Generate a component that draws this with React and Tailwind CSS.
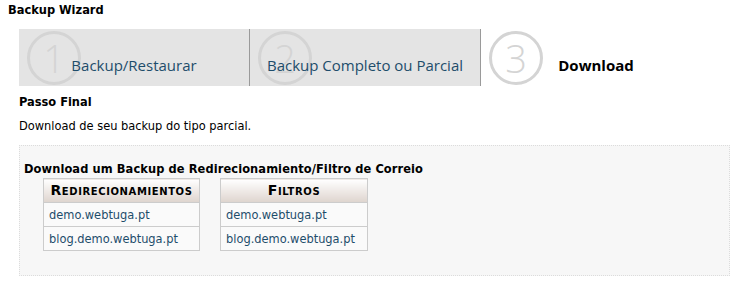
import React from "react";

const tabs = [
  { n: "1", label: "Backup/Restaurar", done: true },
  { n: "2", label: "Backup Completo ou Parcial", done: true },
  { n: "3", label: "Download", done: false },
];

const tables = [
  { title: "Redirecionamientos", width: "w-[157px]", rows: ["demo.webtuga.pt", "blog.demo.webtuga.pt"] },
  { title: "Filtros", width: "w-[148px]", rows: ["demo.webtuga.pt", "blog.demo.webtuga.pt"] },
];

const Step = ({ n, label, done }) => (
  <div
    className={`relative h-full flex items-end justify-center pb-[10px] ${
      done ? "w-[231px] bg-[#e4e4e4] border-r border-[#9a9a9a]" : "w-[230px]"
    }`}
  >
    {/* big circled number behind the label */}
    <div className="absolute left-[8px] top-[2px] w-[54px] h-[54px] rounded-full border-[3px] border-[#d4d4d4] flex items-center justify-center">
      <span className="text-[38px] leading-none text-[#d4d4d4] font-['Open_Sans',sans-serif] font-light">{n}</span>
    </div>
    <span
      className={`relative text-[15px] font-['Open_Sans',sans-serif] ${
        done ? "text-[#1e4d6b]" : "text-black font-bold"
      }`}
    >
      {label}
    </span>
  </div>
);

export default function App() {
  return (
    <div className="w-[741px] h-[289px] bg-white text-[12.7px] text-black font-['DejaVu_Sans_Condensed','DejaVu_Sans',sans-serif]">
      <h1 className="px-[8px] pt-[2px] font-bold leading-[16px]">Backup Wizard</h1>

      {/* Steps */}
      <div className="ml-[19px] mt-[11px] w-[711px] h-[57px] flex">
        {tabs.map((t) => (
          <Step key={t.n} {...t} />
        ))}
      </div>

      <div className="pl-[19px] pr-[11px]">
        <h2 className="mt-[8px] font-bold leading-[16px]">Passo Final</h2>
        <p className="mt-[8px] leading-[16px]">Download de seu backup do tipo parcial.</p>

        {/* Download box */}
        <div className="mt-[11px] h-[131px] bg-[#f7f7f7] border border-dotted border-[#dcdcdc] px-[4px] pt-[15px]">
          <h3 className="font-bold leading-[16px] tracking-[0.1px]">
            Download um Backup de Redirecionamiento/Filtro de Correio
          </h3>
          <div className="mt-[1px] ml-[19px] flex gap-[20px]">
            {tables.map((tb) => (
              <table key={tb.title} className={`${tb.width} border-collapse border border-[#cccccc] bg-[#fafafa]`}>
                <thead>
                  <tr>
                    <th className="h-[24px] p-0 border-b border-[#cccccc] bg-gradient-to-b from-white to-[#ded4ce] font-bold [font-variant:small-caps] text-[14px] tracking-[0.6px] font-['DejaVu_Sans',sans-serif]">
                      {tb.title}
                    </th>
                  </tr>
                </thead>
                <tbody>
                  {tb.rows.map((r) => (
                    <tr key={r}>
                      <td className="h-[24px] border-t border-[#cccccc] px-[5px] text-[#1e4d6b]">{r}</td>
                    </tr>
                  ))}
                </tbody>
              </table>
            ))}
          </div>
        </div>
      </div>
    </div>
  );
}
